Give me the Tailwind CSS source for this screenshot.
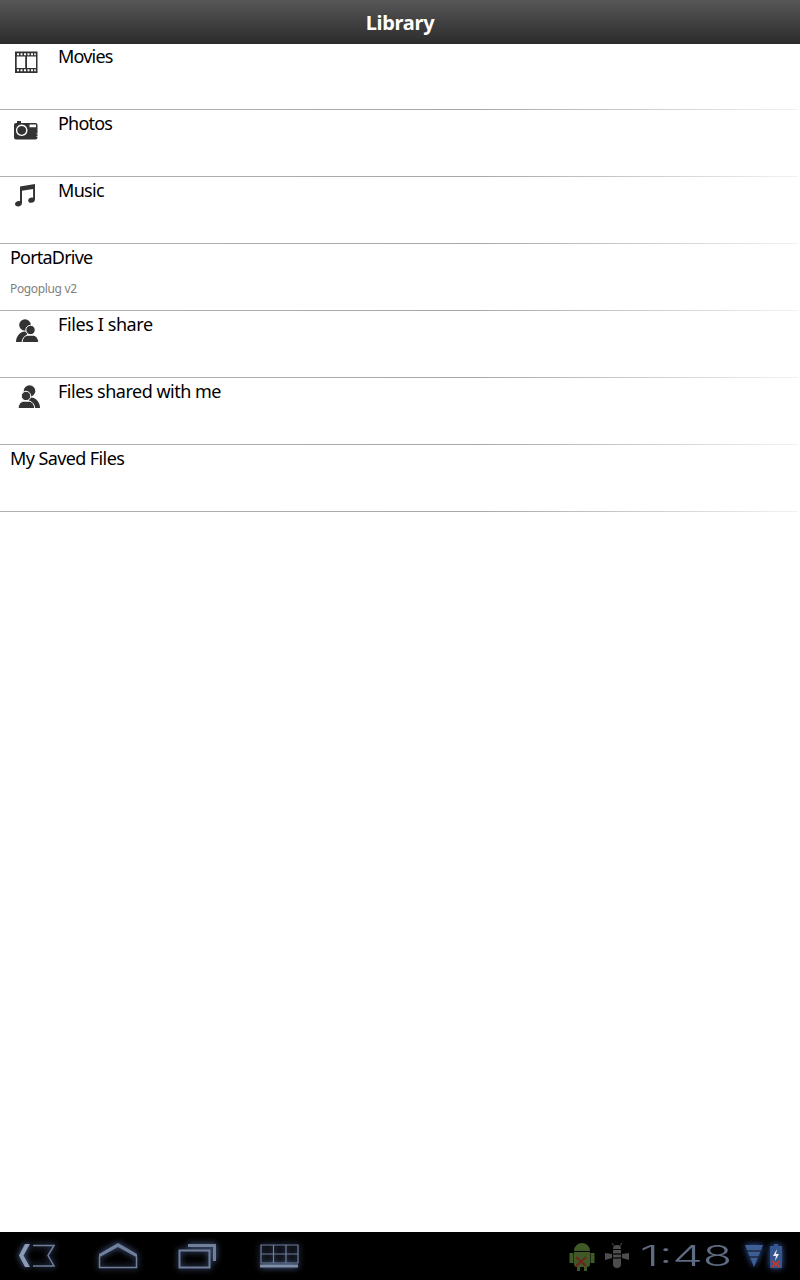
<!DOCTYPE html>
<html><head><meta charset="utf-8"><script src="https://cdn.jsdelivr.net/npm/@tailwindcss/browser@4"></script></head>
<body class="m-0 bg-white">
<div class="w-[800px] h-[1280px] flex flex-col font-['Noto_Sans','Open_Sans',sans-serif] bg-white overflow-hidden">
  <header class="h-[44px] shrink-0 flex items-center justify-center pt-[2px] bg-gradient-to-b from-[#575757] to-[#2c2c2c] text-white font-bold text-[20px] tracking-[-0.3px] leading-none">Library</header>
  <main class="flex-1 flex flex-col">
    <div class="h-[65px] flex items-start">
      <svg class="w-[24px] h-[24px] ml-[14px] mt-[5.5px]" viewBox="0 0 24 24"><path fill="#333" fill-rule="evenodd" d="M1 1.500h22.500v21.500H1zM3 3.200v2h2v-2zM6.500 3.200v2h2v-2zM10 3.200v2h2v-2zM13.500 3.200v2h2v-2zM17 3.200v2h2v-2zM20.200 3.200v2h1.600v-2zM3 19.300v2h2v-2zM6.500 19.300v2h2v-2zM10 19.300v2h2v-2zM13.500 19.300v2h2v-2zM17 19.300v2h2v-2zM20.200 19.300v2h1.600v-2zM2.700 6.500v11.500h8.500V6.500zM13 6.500v11.500h9V6.500z"/></svg>
      <span class="ml-[20px] text-[18px] leading-[24px] tracking-[-0.8px] text-black">Movies</span>
    </div>
    <div class="h-px bg-gradient-to-r from-[#b0b0b0] via-[#a8a8a8] via-60% to-[#f2f2f2] mr-[2px]"></div>
    <div class="h-[66px] flex items-start">
      <svg class="w-[26px] h-[22px] ml-[13px] mt-[9px]" viewBox="0 0 26 22"><path fill="#333" fill-rule="evenodd" d="M4 2h4v2h14.500a2 2 0 0 1 2 2v12.500a2 2 0 0 1-2 2H3a2 2 0 0 1-2-2V6a2 2 0 0 1 2-2h1zM8.700 5.500a5.800 5.800 0 1 0 0.010 0zM8.700 6.900a4.400 4.400 0 1 1-0.010 0zM16.500 5.500v2.800h6.500V5.500zM23.500 14.500v.7h1v-.7zM23.500 17v.7h1v-.7z"/></svg>
      <span class="ml-[19px] mt-[1px] text-[18px] leading-[24px] tracking-[-0.8px] text-black">Photos</span>
    </div>
    <div class="h-px bg-gradient-to-r from-[#b0b0b0] via-[#a8a8a8] via-60% to-[#f2f2f2] mr-[2px]"></div>
    <div class="h-[66px] flex items-start">
      <svg class="w-[24px] h-[24px] ml-[12px] mt-[6px]" viewBox="0 0 24 24"><path fill="#333" d="M8 3.500 23 1v15.500c0 2-1.800 3.300-3.800 3.300-1.800 0-3-1-3-2.400 0-1.700 1.800-3 3.700-3 .6 0 1 .1 1.200.3V6L10 7.800V20c0 2.100-1.800 3.500-3.900 3.500-1.800 0-3.100-1-3.100-2.500 0-1.800 1.800-3.100 3.800-3.100.5 0 .9.100 1.200.2z"/></svg>
      <span class="ml-[22px] mt-[1px] text-[18px] leading-[24px] tracking-[-0.7px] text-black">Music</span>
    </div>
    <div class="h-px bg-gradient-to-r from-[#b0b0b0] via-[#a8a8a8] via-60% to-[#f2f2f2] mr-[2px]"></div>
    <div class="h-[66px] flex flex-col items-start pl-[10px]">
      <span class="mt-[1px] text-[18px] leading-[24px] tracking-[-0.8px] text-black">PortaDrive</span>
      <span class="mt-[12px] text-[12px] leading-[16px] tracking-[-0.35px] text-[#808080]">Pogoplug v2</span>
    </div>
    <div class="h-px bg-gradient-to-r from-[#b0b0b0] via-[#a8a8a8] via-60% to-[#f2f2f2] mr-[2px]"></div>
    <div class="h-[66px] flex items-start">
      <svg class="w-[24px] h-[24px] ml-[15px] mt-[8px]" viewBox="0 0 24 24"><circle cx="10" cy="6" r="5.800" fill="#333"/><path fill="#333" d="M1 23c0-5 3-8.500 6-10l3-.5 3 1L8 23z"/><circle cx="15.500" cy="11" r="4.700" fill="#333" stroke="#fff" stroke-width="1"/><path fill="#333" stroke="#fff" stroke-width="1" d="M7 23.500c.3-4 2.500-6.500 5-7.300h7c2.500.8 4.500 3.300 4.800 7.300z"/></svg>
      <span class="ml-[19px] mt-[1px] text-[18px] leading-[24px] tracking-[-0.4px] text-black">Files I share</span>
    </div>
    <div class="h-px bg-gradient-to-r from-[#b0b0b0] via-[#a8a8a8] via-60% to-[#f2f2f2] mr-[2px]"></div>
    <div class="h-[66px] flex items-start">
      <svg class="w-[24px] h-[24px] ml-[17px] mt-[7px]" viewBox="0 0 24 24"><circle cx="12.500" cy="6" r="5.800" fill="#333"/><path fill="#333" d="M23 23c0-5-3-8.500-6-10l-3-.5-3 1L16 23z"/><circle cx="9" cy="11" r="4.700" fill="#333" stroke="#fff" stroke-width="1"/><path fill="#333" stroke="#fff" stroke-width="1" d="M1 23.500c.3-4 2.300-6.500 4.800-7.300h7c2.500.8 4.700 3.300 5 7.300z"/></svg>
      <span class="ml-[17px] mt-[1px] text-[18px] leading-[24px] tracking-[-0.5px] text-black">Files shared with me</span>
    </div>
    <div class="h-px bg-gradient-to-r from-[#b0b0b0] via-[#a8a8a8] via-60% to-[#f2f2f2] mr-[2px]"></div>
    <div class="h-[66px] flex items-start pl-[10px]">
      <span class="mt-[1px] text-[18px] leading-[24px] tracking-[-0.6px] text-black">My Saved Files</span>
    </div>
    <div class="h-px bg-gradient-to-r from-[#b0b0b0] via-[#a8a8a8] via-60% to-[#f2f2f2] mr-[2px]"></div>
  </main>
  <footer class="h-[48px] shrink-0 bg-black flex items-center justify-between relative">
    <div class="flex items-center">
      <svg class="w-[40px] h-[28px] ml-[17px] drop-shadow-[0_0_3px_#5f78b0]" viewBox="0 0 40 28"><path fill="none" stroke="#6f7f9c" stroke-width="1.500" d="M16 3.500h21l-6 10 6 10.500H16"/><path fill="#8c9ab5" d="M8 2h5L6.500 13.500 13 25H8L2 13.500z"/></svg>
      <svg class="w-[40px] h-[28px] ml-[41px] drop-shadow-[0_0_3px_#5f78b0]" viewBox="0 0 40 28"><path fill="#6f7f9c" d="M20 1 39 12v3.500L20 5 1 15.500V12z"/><path fill="none" stroke="#6f7f9c" stroke-width="1.500" d="M1.500 15V25.500H38.500V15"/></svg>
      <svg class="w-[40px] h-[28px] ml-[40px] drop-shadow-[0_0_3px_#5f78b0]" viewBox="0 0 40 28"><path fill="#6f7f9c" d="M10 2h28v17h-3V5H10z"/><path fill="none" stroke="#6f7f9c" stroke-width="2" d="M1.500 8.500h30v17h-30z"/></svg>
      <svg class="w-[40px] h-[28px] ml-[42px] drop-shadow-[0_0_3px_#5f78b0]" viewBox="0 0 40 28"><path fill="none" stroke="#6f7f9c" stroke-width="1.200" d="M1 3h37v18H1zM1 12h37M13.500 3v18M26 3v18"/><path fill="#7f8ea9" d="M0 22.500h38v3H0z"/></svg>
    </div>
    <div class="flex items-center">
      <svg class="w-[28px] h-[32px] blur-[0.7px]" viewBox="0 0 28 32"><path fill="#3f5a26" d="M6 11a8 8 0 0 1 16 0zM6 12h16v12a3 3 0 0 1-3 3H9a3 3 0 0 1-3-3zM1.500 13h4v10h-4zM22.500 13h4v10h-4zM9 27h3v4H9zM16 27h3v4h-3z"/><path stroke="#6e2320" stroke-width="2" d="M8 17l10 9M18 17l-10 9"/></svg>
      <svg class="w-[26px] h-[26px] ml-[8px]" viewBox="0 0 26 26"><path fill="#4d4d4d" d="M9 6a4 4 0 0 1 8 0zM9 7h8v14a4 4 0 0 1-8 0zM1 10l7 1v4l-7 2zM25 10l-7 1v4l7 2z"/><path stroke="#111" stroke-width="1.500" d="M9 11h8M9 15h8"/><path stroke="#4d4d4d" d="M10 3 8 0M16 3l2-3"/></svg>
      <span class="ml-[10px] w-[95px] text-[#5f6b82] text-[28px] leading-none font-['Inter'] font-light origin-left scale-x-[1.72] inline-block">1:48</span>
      <svg class="w-[18px] h-[22px] ml-[10px] drop-shadow-[0_0_3px_#3a5fb0]" viewBox="0 0 18 22"><path fill="#3d5f95" d="M0 0h18L9 22z"/><path stroke="#111" d="M2 6h14M4 12h10"/></svg>
      <svg class="w-[12px] h-[24px] ml-[7px] mr-[18px] drop-shadow-[0_0_3px_#3a5fb0]" viewBox="0 0 12 24"><path fill="#35558f" d="M4 0h4v2h4v22H0V2h4z"/><path fill="#eee" d="M7 5 3 12h3l-1 5 4-7H6z"/><path stroke="#c0392b" stroke-width="2" d="M2 17l8 6M10 17l-8 6"/></svg>
    </div>
  </footer>
</div>
</body></html>
